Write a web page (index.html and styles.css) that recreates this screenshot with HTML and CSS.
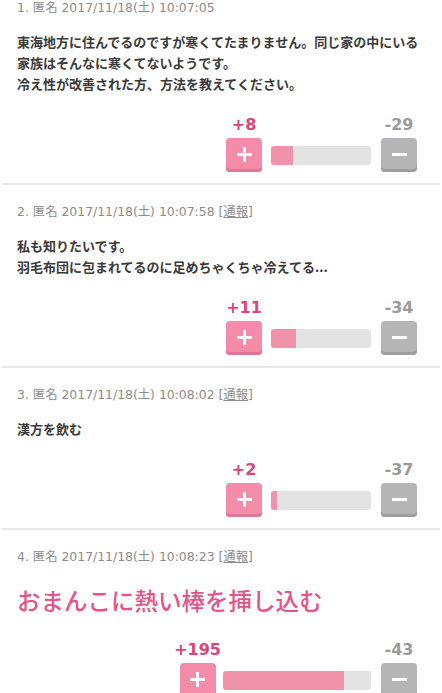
FILE: index.html
```html
<!DOCTYPE html>
<html lang="ja">

<head>
  <meta charset="UTF-8">
  <meta name="viewport" content="width=device-width, initial-scale=1.0">
  <title>コメント</title>
  <link rel="stylesheet" href="styles.css">
</head>

<body>
  <ul class="comments">
    <li class="comment">
      <div class="meta">1. 匿名 2017/11/18(土) 10:07:05</div>
      <div class="body">東海地方に住んでるのですが寒くてたまりません。同じ家の中にいる<br>家族はそんなに寒くてないようです。<br>冷え性が改善された方、方法を教えてください。</div>
      <div class="vote">
        <span class="count plus">+8</span>
        <span></span>
        <span class="count minus">-29</span>
        <button class="btn btn-plus"></button>
        <div class="bar"><div class="bar-fill" style="width: 22%"></div></div>
        <button class="btn btn-minus"></button>
      </div>
    </li>

    <li class="comment">
      <div class="meta">2. 匿名 2017/11/18(土) 10:07:58 [<a href="#">通報</a>]</div>
      <div class="body">私も知りたいです。<br>羽毛布団に包まれてるのに足めちゃくちゃ冷えてる...</div>
      <div class="vote">
        <span class="count plus">+11</span>
        <span></span>
        <span class="count minus">-34</span>
        <button class="btn btn-plus"></button>
        <div class="bar"><div class="bar-fill" style="width: 25%"></div></div>
        <button class="btn btn-minus"></button>
      </div>
    </li>

    <li class="comment">
      <div class="meta">3. 匿名 2017/11/18(土) 10:08:02 [<a href="#">通報</a>]</div>
      <div class="body">漢方を飲む</div>
      <div class="vote">
        <span class="count plus">+2</span>
        <span></span>
        <span class="count minus">-37</span>
        <button class="btn btn-plus"></button>
        <div class="bar"><div class="bar-fill" style="width: 5%"></div></div>
        <button class="btn btn-minus"></button>
      </div>
    </li>

    <li class="comment">
      <div class="meta">4. 匿名 2017/11/18(土) 10:08:23 [<a href="#">通報</a>]</div>
      <div class="body body-big">おまんこに熱い棒を挿し込む</div>
      <div class="vote vote-wide">
        <span class="count plus">+195</span>
        <span></span>
        <span class="count minus">-43</span>
        <button class="btn btn-plus"></button>
        <div class="bar"><div class="bar-fill" style="width: 82%"></div></div>
        <button class="btn btn-minus"></button>
      </div>
    </li>
  </ul>
</body>

</html>
```

FILE: styles.css
```css
body {
  margin: 0;
  padding: 0;
  background-color: #fff;
  font-family: 'DejaVu Sans', 'Noto Sans CJK JP', sans-serif;
  color: #333;
}

.comments {
  list-style: none;
  margin: 0;
  padding: 0;
}

.comment {
  margin: 0 2px;
  padding: 19px 15px 11px 15px;
  border-bottom: 2px solid #e8e8e8;
}

.comment:first-child {
  padding-top: 0;
}

.meta {
  font-size: 12.4px;
  line-height: 16px;
  color: #8c8c8c;
}

.meta a {
  color: #8c8c8c;
  text-decoration: underline;
}

.body {
  margin-top: 15px;
  font-family: 'Noto Sans CJK JP', sans-serif;
  font-size: 13px;
  font-weight: bold;
  line-height: 21px;
  color: #3a3a3a;
}

.body-big {
  margin-top: 16px;
  font-size: 23.5px;
  font-weight: 500;
  line-height: 38px;
  color: #e4548a;
}

.vote {
  display: grid;
  grid-template-columns: auto 119px auto;
  justify-content: end;
  justify-items: center;
  align-items: center;
  row-gap: 5px;
  margin-top: 23px;
  padding-right: 8px;
}

.count {
  font-family: 'DejaVu Sans', sans-serif;
  font-size: 16px;
  font-weight: bold;
  line-height: 16px;
}

.count.plus {
  color: #dc4379;
}

.count.minus {
  color: #9a9a9a;
}

.btn {
  position: relative;
  width: 36px;
  height: 34px;
  padding: 0;
  border: none;
  border-radius: 4px;
  cursor: pointer;
}

.btn-plus {
  background-color: #f38ba9;
  box-shadow: inset 0 -3px 0 #df7795;
}

.btn-minus {
  background-color: #b5b5b5;
  box-shadow: inset 0 -3px 0 #9e9e9e;
}

/* white cross / dash drawn with pseudo elements */
.btn::before,
.btn-plus::after {
  content: '';
  position: absolute;
  left: 50%;
  top: 15px;
  width: 15px;
  height: 3px;
  margin-left: -7.5px;
  background: #fff;
}

.btn-plus::after {
  top: 9px;
  width: 3px;
  height: 15px;
  margin-left: -1.5px;
}

.bar {
  justify-self: stretch;
  height: 19px;
  margin: 0 10px 0 9px;
  border-radius: 3px;
  background-color: #e3e3e3;
  overflow: hidden;
}

.bar-fill {
  height: 100%;
  min-width: 6px;
  background-color: #f192ab;
}

.vote-wide {
  grid-template-columns: auto 160px auto;
}

.vote-wide .bar {
  margin-left: 2px;
}
```
